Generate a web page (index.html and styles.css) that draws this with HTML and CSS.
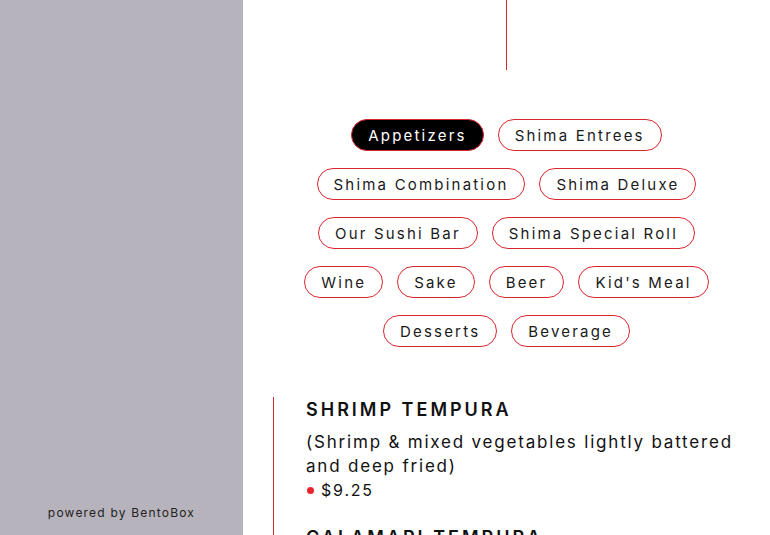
FILE: index.html
```html
<!DOCTYPE html>
<html>
<head>
<meta charset="utf-8">
<link rel="stylesheet" href="styles.css">
</head>
<body>
<aside class="sidebar">
  <div class="powered">powered by BentoBox</div>
</aside>
<main class="main">
  <div class="divider"></div>
  <nav class="categories">
    <a class="pill active">Appetizers</a>
    <a class="pill">Shima Entrees</a>
    <a class="pill">Shima Combination</a>
    <a class="pill">Shima Deluxe</a>
    <a class="pill">Our Sushi Bar</a>
    <a class="pill">Shima Special Roll</a>
    <a class="pill">Wine</a>
    <a class="pill">Sake</a>
    <a class="pill">Beer</a>
    <a class="pill">Kid's Meal</a>
    <a class="pill">Desserts</a>
    <a class="pill">Beverage</a>
  </nav>
  <section class="menu">
    <div class="item">
      <h3 class="item-title">SHRIMP TEMPURA</h3>
      <p class="item-desc">(Shrimp &amp; mixed vegetables lightly battered and deep fried)</p>
      <p class="item-price"><span class="dot"></span>$9.25</p>
    </div>
    <div class="item">
      <h3 class="item-title">CALAMARI TEMPURA</h3>
      <p class="item-desc">(Squid lightly battered and deep fried)</p>
      <p class="item-price"><span class="dot"></span>$8.95</p>
    </div>
  </section>
</main>
</body>
</html>
```
FILE: styles.css
```css
html, body {
  margin: 0;
  padding: 0;
  height: 535px;
  overflow: hidden;
}
body {
  display: flex;
  font-family: "Inter", "Open Sans", sans-serif;
  color: #111;
  background: #fff;
}
.sidebar {
  width: 243px;
  flex: none;
  background: #b7b3bc;
  display: flex;
  flex-direction: column;
  justify-content: flex-end;
  align-items: center;
  padding-bottom: 15px;
  box-sizing: border-box;
}
.powered {
  font-size: 12px;
  letter-spacing: 1.2px;
  color: #222;
}
.main {
  flex: 1;
  padding: 0 25px;
  display: flex;
  flex-direction: column;
}
.main > * {
  flex: none;
}
.divider {
  width: 1px;
  height: 70px;
  background: #d9262e;
  align-self: center;
}
.categories {
  margin: 49px auto 0;
  width: 430px;
  display: flex;
  flex-wrap: wrap;
  justify-content: center;
  gap: 17px 14px;
}
.pill {
  height: 32px;
  box-sizing: border-box;
  border: 1px solid #d9262e;
  border-radius: 16px;
  padding: 0 16px;
  display: flex;
  align-items: center;
  font-size: 15px;
  letter-spacing: 2.2px;
  color: #1a1a1a;
}
.pill.active {
  background: #000;
  color: #fff;
}
.menu {
  margin: 50px 0 0 5px;
  border-left: 1px solid #d9262e;
  padding-left: 32px;
  padding-top: 1px;
}
.item {
  margin-bottom: 24px;
}
.item-title {
  margin: 0;
  font-size: 18px;
  line-height: 24px;
  font-weight: 600;
  letter-spacing: 3px;
}
.item-desc {
  margin: 8px 0 0;
  font-size: 17px;
  line-height: 24px;
  letter-spacing: 1.8px;
}
.item-price {
  margin: 0;
  font-size: 16px;
  line-height: 24px;
  letter-spacing: 1.8px;
  display: flex;
  align-items: center;
}
.dot {
  width: 7px;
  height: 7px;
  border-radius: 50%;
  background: #e8232b;
  margin: 0 7px 0 1px;
}
```
